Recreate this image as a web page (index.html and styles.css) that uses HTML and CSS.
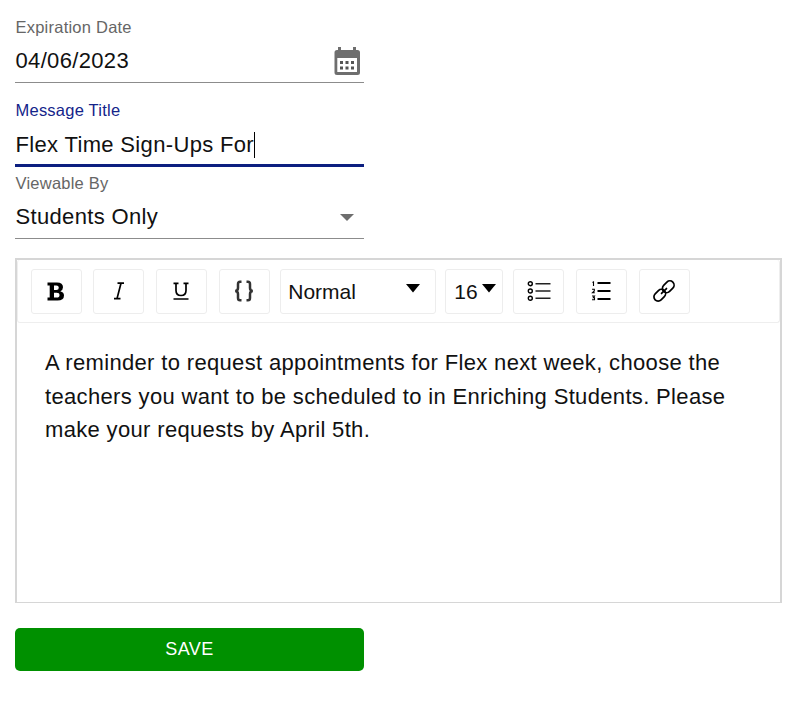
FILE: index.html
```html
<!DOCTYPE html>
<html lang="en">
<head>
  <meta charset="UTF-8">
  <title>Edit Message</title>
  <link rel="stylesheet" href="styles.css">
</head>
<body>
  <div class="field date">
    <div class="label">Expiration Date</div>
    <div class="value">
      <span>04/06/2023</span>
      <svg class="calendar" width="26" height="29" viewBox="0 0 26 29">
        <path fill="#6e6e6e" fill-rule="evenodd" d="M4 0h3v3h12V0h3v3h1.500q2.500 0 2.500 2.500v20q0 2.500-2.500 2.500H3q-2.500 0-2.500-2.500v-20Q.5 3 3 3h1zM3.300 11v14h19.700V11z"/>
        <path fill="#555" d="M6 14h3v3H6zm5.500 0h3v3h-3zm5.500 0h3v3h-3zM6 19.500h3v3H6zm5.500 0h3v3h-3zm5.500 0h3v3h-3z"/>
      </svg>
    </div>
  </div>

  <div class="field title active">
    <div class="label">Message Title</div>
    <div class="value"><span>Flex Time Sign-Ups For</span><i class="caret"></i></div>
  </div>

  <div class="field viewable">
    <div class="label">Viewable By</div>
    <div class="value">
      <span>Students Only</span>
      <svg class="arrow" width="14" height="7" viewBox="0 0 14 7"><path fill="#6e6e6e" d="M0 0h14L7 7z"/></svg>
    </div>
  </div>

  <div class="editor">
    <div class="toolbar">
      <div class="tool">
        <svg width="18" height="19" viewBox="0 0 18 19"><path fill="#000" fill-rule="evenodd" d="M.5.500H10q6 0 6 4.800 0 2.900-2.700 3.900 3.700 1 3.700 4.300 0 5-6.500 5H.5v-3h2.200v-12H.5zM7 3.400v4.700h2.300q2.500 0 2.500-2.400 0-2.300-2.500-2.300zm0 7.400v4.800h2.700q2.800 0 2.800-2.400t-2.800-2.400z"/></svg>
      </div>
      <div class="tool">
        <svg width="12" height="18" viewBox="0 0 12 18"><path fill="none" stroke="#000" stroke-width="1.700" d="M4.500 1.200H11M1 16.600h6.500M8 1.200L4 16.600"/></svg>
      </div>
      <div class="tool">
        <svg width="16" height="18" viewBox="0 0 16 18"><path fill="none" stroke="#000" stroke-width="1.700" d="M.5 1.300h5M10.500 1.300h5M3 1.300v7.200q0 5 5 5t5-5V1.300M.5 17h15"/></svg>
      </div>
      <div class="tool">
        <svg width="20" height="22" viewBox="0 0 20 22"><path fill="none" stroke="#333" stroke-width="2.500" d="M7.500 1.700H6Q4 1.700 4 4v4q0 2.800-2.800 3Q4 11.200 4 14v4q0 2.300 2 2.300h1.500M12.500 1.700H14q2 0 2 2.300v4q0 2.800 2.800 3-2.800.2-2.800 3v4q0 2.300-2 2.300h-1.500"/></svg>
      </div>
      <div class="tool block-type">
        <span>Normal</span>
        <svg width="14" height="9" viewBox="0 0 14 9"><path d="M0 0h14L7 8.500z"/></svg>
      </div>
      <div class="tool font-size">
        <span>16</span>
        <svg width="14" height="9" viewBox="0 0 14 9"><path d="M0 0h14L7 8.500z"/></svg>
      </div>
      <div class="tool">
        <svg width="24" height="20" viewBox="0 0 24 20">
          <g fill="none" stroke="#000" stroke-width="1.400"><circle cx="3.300" cy="2.700" r="2"/><circle cx="3.300" cy="10" r="2"/><circle cx="3.300" cy="17.300" r="2"/></g>
          <path stroke="#222" stroke-width="1.400" d="M8.500 2.700h15M8.500 10h15M8.500 17.300h15"/>
        </svg>
      </div>
      <div class="tool">
        <svg width="20" height="20" viewBox="0 0 20 20">
          <path stroke="#000" stroke-width="2" d="M6.500 2h13M6.500 10h13M6.500 18h13"/>
          <path fill="none" stroke="#000" stroke-width="1.100" d="M1.500 1.500l1-.5v4M1 8.300h2.300V10L1.500 11.700h2.300M1 15h2.500L2.300 16.700h1.200v2H1"/>
        </svg>
      </div>
      <div class="tool">
        <svg width="22" height="22" viewBox="0 0 22 22">
          <g fill="none" stroke="#000" stroke-width="1.700" stroke-linecap="round" transform="rotate(-45 11 11)">
            <rect x="-1.500" y="6.800" width="13" height="8.400" rx="4.200"/>
            <rect x="10.500" y="6.800" width="13" height="8.400" rx="4.200"/>
            <path d="M7.500 11h7"/>
          </g>
        </svg>
      </div>
    </div>
    <div class="content">A reminder to request appointments for Flex next week, choose the teachers you want to be scheduled to in Enriching Students. Please make your requests by April 5th.</div>
  </div>

  <button class="save">SAVE</button>
</body>
</html>
```

FILE: styles.css
```css
* { box-sizing: border-box; }
body { margin: 0; padding: 15px 18px 0 15px; background: #fff; color: #111; font-family: "Liberation Sans", Arial, sans-serif; font-size: 22px; letter-spacing: 0.34px; }
svg { display: block; flex: none; }

.field { width: 349px; border-bottom: 1.5px solid #8c8c8c; }
.label { height: 24px; line-height: 24px; font-size: 16.5px; letter-spacing: 0.23px; color: #666; padding-left: 0.5px; }
.value { display: flex; align-items: center; height: 44px; line-height: 44px; padding-left: 0.5px; }
.value svg { margin-left: auto; }
.date { height: 68px; }
.calendar { margin-right: 4px; }
.title { height: 69px; margin-top: 15px; }
.title .value { height: 45px; line-height: 46px; }
.viewable { height: 68px; margin-top: 4px; }
.active { border-bottom: 3px solid #0c1f80; }
.active .label { color: #14248a; }
.arrow { margin-right: 10px; }
.caret { width: 1px; height: 26px; background: #000; }

.editor { height: 345px; margin-top: 19px; border: 2px solid #d6d6d6; border-bottom-width: 1px; }
.toolbar { display: flex; align-items: center; height: 63px; padding: 0 12.5px; border: 1px solid #eee; border-top: 0; border-radius: 3px; }
.tool { display: flex; align-items: center; justify-content: center; width: 51px; height: 45px; margin-right: 11.7px; border: 1px solid #ededed; border-radius: 3px; }
.block-type { justify-content: space-between; width: 156px; margin-left: -1px; margin-right: 9px; padding: 0 15px 0 7px; font-size: 21px; letter-spacing: 0; }
.font-size { justify-content: space-between; width: 58px; margin-right: 10px; padding: 0 6px 0 8px; font-size: 21px; letter-spacing: 0; }
.tool span { padding-top: 1px; }
.block-type svg, .font-size svg { margin-top: -5px; }
.content { padding: 23px 28px; line-height: 33.5px; }

.save { display: block; width: 349px; height: 43px; margin-top: 25px; border: 0; border-radius: 5px; background: #009000; color: #fff; font-family: inherit; font-size: 18px; letter-spacing: 0.5px; }
```
